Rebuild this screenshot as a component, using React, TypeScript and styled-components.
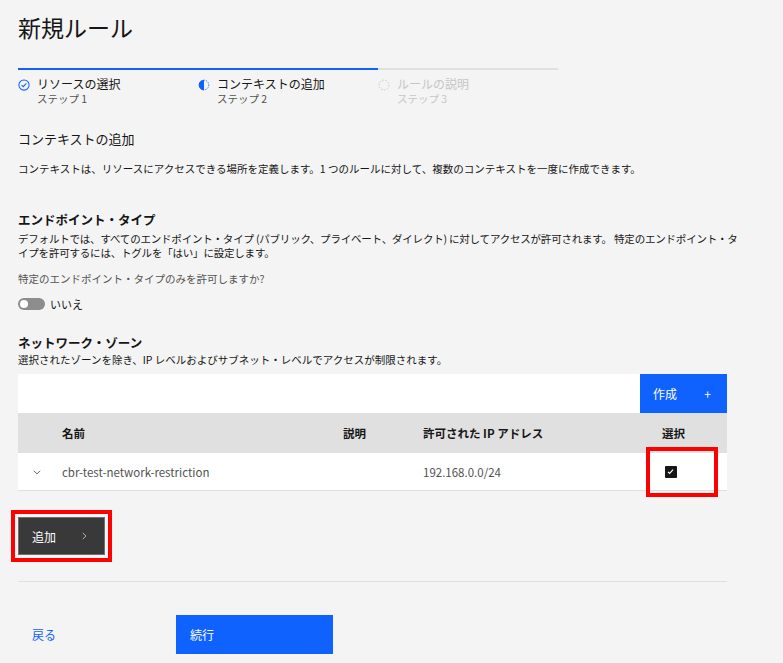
import React from "react";
import styled, { createGlobalStyle } from "styled-components";

const GlobalStyle = createGlobalStyle`
  html, body {
    margin: 0;
    padding: 0;
    background: #f4f4f4;
  }
  body {
    font-family: "Noto Sans CJK JP", "Noto Sans", "Liberation Sans", sans-serif;
    color: #161616;
  }
  * { box-sizing: border-box; }
`;

const Page = styled.main`
  width: 783px;
  min-height: 663px;
  padding: 12px 56px 0 18px;
`;

const Title = styled.h1`
  margin: 0;
  font-size: 23px;
  font-weight: 400;
  line-height: 30px;
`;

const Progress = styled.ol`
  display: flex;
  list-style: none;
  margin: 26px 0 0;
  padding: 0;
`;

const Step = styled.li<{ $state: "done" | "current" | "todo" }>`
  width: 180px;
  border-top: 2px solid ${(p) => (p.$state === "todo" ? "#e0e0e0" : "#0f62fe")};
  padding-top: 6px;
  display: flex;
  gap: 7px;
  color: ${(p) => (p.$state === "todo" ? "#c6c6c6" : "#161616")};
`;

const StepIcon = styled.svg`
  flex: none;
  margin-top: 3px;
`;

const StepText = styled.div`
  display: flex;
  flex-direction: column;
`;

const StepLabel = styled.span`
  font-size: 12px;
  line-height: 16px;
`;

const StepSub = styled.span<{ $muted?: boolean }>`
  font-size: 10.5px;
  line-height: 14px;
  color: ${(p) => (p.$muted ? "#c6c6c6" : "#525252")};
`;

const SectionTitle = styled.h2`
  margin: 24px 0 0;
  font-size: 13px;
  font-weight: 400;
  line-height: 18px;
`;

const Text = styled.p<{ $muted?: boolean; $top?: number; $nowrap?: boolean }>`
  margin: ${(p) => p.$top ?? 0}px 0 0;
  font-size: 10.5px;
  line-height: ${(p) => (p.$nowrap ? 13.5 : 13)}px;
  white-space: ${(p) => (p.$nowrap ? "nowrap" : "normal")};
  letter-spacing: ${(p) => (p.$nowrap ? "-0.2px" : "0")};
  color: ${(p) => (p.$muted ? "#525252" : "#161616")};
`;

const Heading = styled.h3<{ $top: number }>`
  margin: ${(p) => p.$top}px 0 0;
  font-size: 12.5px;
  font-weight: 700;
  line-height: 18px;
`;

const ToggleRow = styled.label`
  display: flex;
  align-items: center;
  gap: 5px;
  margin-top: 11px;
  font-size: 11px;
  color: #161616;
`;

const Track = styled.span`
  position: relative;
  width: 27px;
  height: 12px;
  border-radius: 6px;
  background: #8d8d8d;

  &::after {
    content: "";
    position: absolute;
    left: 2px;
    top: 2px;
    width: 8px;
    height: 8px;
    border-radius: 50%;
    background: #fff;
  }
`;

const Table = styled.section`
  margin-top: 8px;
  width: 709px;
`;

const Toolbar = styled.div`
  height: 39px;
  background: #fff;
  display: flex;
  justify-content: flex-end;
`;

const CreateButton = styled.button`
  width: 87px;
  height: 39px;
  border: 0;
  background: #0f62fe;
  color: #fff;
  font: inherit;
  font-size: 12px;
  display: flex;
  align-items: center;
  justify-content: space-between;
  padding: 0 16px 0 13px;
`;

const Row = styled.div<{ $head?: boolean }>`
  display: grid;
  grid-template-columns: 44px 281px 80px 197px 107px;
  align-items: center;
  height: ${(p) => (p.$head ? 40 : 38)}px;
  background: ${(p) => (p.$head ? "#e0e0e0" : "#fff")};
  border-bottom: ${(p) => (p.$head ? "none" : "1px solid #e0e0e0")};
  font-size: 11.5px;
  font-weight: ${(p) => (p.$head ? 700 : 400)};
  color: ${(p) => (p.$head ? "#161616" : "#525252")};
`;

const Cell = styled.div<{ $center?: boolean }>`
  position: relative;
  display: flex;
  align-items: center;
  justify-content: ${(p) => (p.$center ? "center" : "flex-start")};
  height: 100%;
`;

const ChevronCell = styled(Cell)`
  padding-left: 14px;
`;

const CheckBox = styled.span`
  width: 12px;
  height: 12px;
  border-radius: 1px;
  background: #161616;
  display: flex;
  align-items: center;
  justify-content: center;
  margin-left: -6px;
`;

const Highlight = styled.span`
  position: absolute;
  left: 26px;
  top: -6px;
  width: 72px;
  height: 50px;
  border: 4px solid #ff0000;
  pointer-events: none;
`;

const AddButton = styled.button`
  margin-top: 26px;
  width: 87px;
  height: 38px;
  border: 1px solid #6f6f6f;
  background: #393939;
  color: #fff;
  font: inherit;
  font-size: 12px;
  display: flex;
  align-items: center;
  justify-content: space-between;
  padding: 0 15px 0 13px;
  outline: 4px solid #ff0000;
  outline-offset: 3px;
`;

const Divider = styled.hr`
  margin: 26px 0 0;
  width: 709px;
  border: 0;
  border-top: 1px solid #e0e0e0;
`;

const Footer = styled.div`
  display: flex;
  align-items: center;
  margin-top: 33px;
`;

const BackLink = styled.a`
  width: 158px;
  padding-left: 14px;
  font-size: 12px;
  color: #0f62fe;
  text-decoration: none;
`;

const NextButton = styled.button`
  width: 157px;
  height: 39px;
  border: 0;
  background: #0f62fe;
  color: #fff;
  font: inherit;
  font-size: 12px;
  text-align: left;
  padding-left: 14px;
`;

const CheckCircle = () => (
  <StepIcon width="12" height="12" viewBox="0 0 16 16">
    <circle cx="8" cy="8" r="6.8" fill="none" stroke="#0f62fe" strokeWidth="1.4" />
    <path d="M4.8 8.2 7 10.3 11.2 5.9" fill="none" stroke="#0f62fe" strokeWidth="1.4" />
  </StepIcon>
);

const HalfCircle = () => (
  <StepIcon width="12" height="12" viewBox="0 0 16 16">
    <path d="M8 1a7 7 0 0 0 0 14z" fill="#0f62fe" />
    <circle cx="8" cy="8" r="6.4" fill="none" stroke="#0f62fe" strokeWidth="1.3" strokeDasharray="1.6 1.6" />
  </StepIcon>
);

const DashedCircle = () => (
  <StepIcon width="12" height="12" viewBox="0 0 16 16">
    <circle cx="8" cy="8" r="6.6" fill="none" stroke="#c6c6c6" strokeWidth="1.3" strokeDasharray="2 2" />
  </StepIcon>
);

const App: React.FC = () => {
  return (
    <>
      <GlobalStyle />
      <Page>
        <Title>新規ルール</Title>

        <Progress>
          <Step $state="done">
            <CheckCircle />
            <StepText>
              <StepLabel>リソースの選択</StepLabel>
              <StepSub>ステップ 1</StepSub>
            </StepText>
          </Step>
          <Step $state="current">
            <HalfCircle />
            <StepText>
              <StepLabel>コンテキストの追加</StepLabel>
              <StepSub>ステップ 2</StepSub>
            </StepText>
          </Step>
          <Step $state="todo">
            <DashedCircle />
            <StepText>
              <StepLabel>ルールの説明</StepLabel>
              <StepSub $muted>ステップ 3</StepSub>
            </StepText>
          </Step>
        </Progress>

        <SectionTitle>コンテキストの追加</SectionTitle>
        <Text $top={14}>
          コンテキストは、リソースにアクセスできる場所を定義します。1 つのルールに対して、複数のコンテキストを一度に作成できます。
        </Text>

        <Heading $top={36}>エンドポイント・タイプ</Heading>
        <Text $top={3} $nowrap>
          デフォルトでは、すべてのエンドポイント・タイプ (パブリック、プライベート、ダイレクト) に対してアクセスが許可されます。 特定のエンドポイント・タ
          <br />
          イプを許可するには、トグルを「はい」に設定します。
        </Text>
        <Text $muted $top={13}>特定のエンドポイント・タイプのみを許可しますか?</Text>
        <ToggleRow>
          <Track />
          いいえ
        </ToggleRow>

        <Heading $top={22}>ネットワーク・ゾーン</Heading>
        <Text $top={1}>選択されたゾーンを除き、IP レベルおよびサブネット・レベルでアクセスが制限されます。</Text>

        <Table>
          <Toolbar>
            <CreateButton>
              作成
              <span>+</span>
            </CreateButton>
          </Toolbar>
          <Row $head>
            <Cell />
            <Cell>名前</Cell>
            <Cell>説明</Cell>
            <Cell>許可された IP アドレス</Cell>
            <Cell $center>選択</Cell>
          </Row>
          <Row>
            <ChevronCell>
              <svg width="10" height="10" viewBox="0 0 16 16">
                <path d="M3 6l5 5 5-5" fill="none" stroke="#525252" strokeWidth="1.5" />
              </svg>
            </ChevronCell>
            <Cell>cbr-test-network-restriction</Cell>
            <Cell />
            <Cell>192.168.0.0/24</Cell>
            <Cell $center>
              <CheckBox>
                <svg width="9" height="9" viewBox="0 0 16 16">
                  <path d="M3.5 8.5 6.5 11.5 12.5 4.5" fill="none" stroke="#fff" strokeWidth="2" />
                </svg>
              </CheckBox>
              <Highlight />
            </Cell>
          </Row>
        </Table>

        <AddButton>
          追加
          <svg width="10" height="10" viewBox="0 0 16 16">
            <path d="M6 3l5 5-5 5" fill="none" stroke="#c6c6c6" strokeWidth="1.4" />
          </svg>
        </AddButton>

        <Divider />

        <Footer>
          <BackLink href="#">戻る</BackLink>
          <NextButton>続行</NextButton>
        </Footer>
      </Page>
    </>
  );
};

export default App;
